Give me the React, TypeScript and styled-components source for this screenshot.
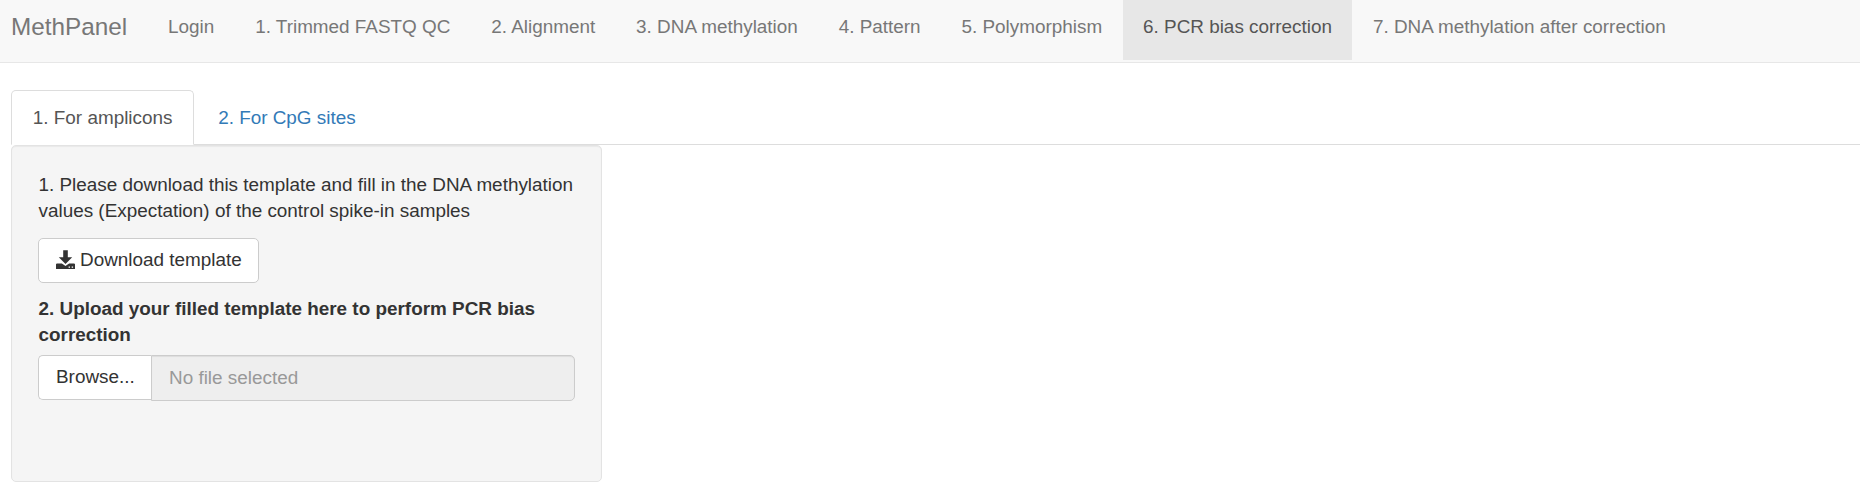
import React from "react";
import styled, { createGlobalStyle } from "styled-components";

const GlobalStyle = createGlobalStyle`
  *, *::before, *::after { box-sizing: border-box; }
  body {
    margin: 0;
    background: #fff;
    color: #333;
    font-family: "Liberation Sans", Arial, sans-serif;
    font-size: 18.9px;
    line-height: 26px;
  }
`;

const Navbar = styled.nav`
  display: flex;
  align-items: flex-start;
  height: 63px;
  padding-left: 11px;
  background: #f8f8f8;
  border-bottom: 1px solid #e7e7e7;
`;

const Brand = styled.a`
  width: 136.6px;
  padding-top: 14px;
  color: #777;
  font-size: 24.3px;
`;

const NavItem = styled.a<{ $active?: boolean }>`
  height: 60px;
  padding: 14px 20.45px 0;
  white-space: nowrap;
  color: ${(p) => (p.$active ? "#555" : "#777")};
  background: ${(p) => (p.$active ? "#e7e7e7" : "transparent")};
`;

const Content = styled.main`
  padding: 27px 0 0 11px;
`;

const Tabs = styled.div`
  display: flex;
  gap: 2.5px;
  height: 55px;
  border-bottom: 1px solid #ddd;
`;

const Tab = styled.a<{ $active?: boolean }>`
  height: 55px;
  padding: 14px 20.4px 0 20.8px;
  border: 1px solid ${(p) => (p.$active ? "#ddd" : "transparent")};
  border-bottom-color: ${(p) => (p.$active ? "#fff" : "transparent")};
  border-radius: 5px 5px 0 0;
  background: ${(p) => (p.$active ? "#fff" : "transparent")};
  color: ${(p) => (p.$active ? "#555" : "#337ab7")};
`;

const Well = styled.section`
  width: 591px;
  height: 337px;
  padding: 26px 26px 0;
  background: #f5f5f5;
  border: 1px solid #e3e3e3;
  border-radius: 5px;
  box-shadow: inset 0 1px 1px rgba(0, 0, 0, 0.05);
`;

const Step = styled.p`
  margin: 0 0 14px;
  padding-left: 0.5px;
`;

const Button = styled.button`
  display: inline-flex;
  align-items: center;
  height: 45px;
  padding: 0 16.5px 1px 17px;
  color: #333;
  background: #fff;
  border: 1px solid #ccc;
  border-radius: 5px;
  font: inherit;
  white-space: nowrap;
`;

const DownloadIcon = styled.svg`
  width: 19px;
  height: 19px;
  margin: 0 5px 2px 0;
  fill: currentColor;
`;

const UploadLabel = styled.label`
  display: block;
  margin: 13px 0 7px;
  padding-left: 0.5px;
  font-weight: 700;
`;

const FileField = styled.div`
  display: flex;
  align-items: flex-start;
`;

const BrowseButton = styled(Button)`
  width: 113px;
  border-right: 0;
  border-radius: 5px 0 0 5px;
`;

const FileName = styled.input`
  flex: 1;
  min-width: 0;
  height: 46px;
  padding: 0 17px;
  background: #eee;
  border: 1px solid #ccc;
  border-radius: 0 5px 5px 0;
  box-shadow: inset 0 1px 1px rgba(0, 0, 0, 0.075);
  font: inherit;
  &::placeholder { color: #999; opacity: 1; }
`;

const pages = [
  "Login",
  "1. Trimmed FASTQ QC",
  "2. Alignment",
  "3. DNA methylation",
  "4. Pattern",
  "5. Polymorphism",
  "6. PCR bias correction",
  "7. DNA methylation after correction",
];

export default function App() {
  return (
    <>
      <GlobalStyle />
      <Navbar>
        <Brand>MethPanel</Brand>
        {pages.map((page) => (
          <NavItem key={page} $active={page.startsWith("6.")}>{page}</NavItem>
        ))}
      </Navbar>
      <Content>
        <Tabs>
          <Tab $active>1. For amplicons</Tab>
          <Tab>2. For CpG sites</Tab>
        </Tabs>
        <Well>
          <Step>
            1. Please download this template and fill in the DNA methylation values (Expectation) of the control spike-in samples
          </Step>
          <Button>
            <DownloadIcon viewBox="0 0 19 19" aria-hidden="true">
              <path d="M7.2 0.3h4.6v7h4.4L9.5 14 2.8 7.3h4.4z" />
              <path fillRule="evenodd" d="M0.7 13.6h5.2l3.6 2.4 3.6-2.4h5.2l.7.7V19H0v-4.7zM12.6 16.4v1.3h1.4v-1.3zM15.7 16.4v1.3h1.4v-1.3z" />
            </DownloadIcon>
            Download template
          </Button>
          <UploadLabel>2. Upload your filled template here to perform PCR bias correction</UploadLabel>
          <FileField>
            <BrowseButton>Browse...</BrowseButton>
            <FileName placeholder="No file selected" readOnly />
          </FileField>
        </Well>
      </Content>
    </>
  );
}
